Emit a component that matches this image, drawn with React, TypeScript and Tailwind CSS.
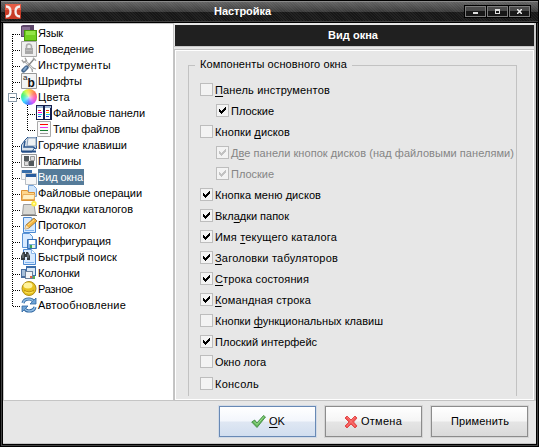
import { useLayoutEffect, useRef, type ReactNode } from "react";

/* A single-line label whose tracking is adjusted to fill a given width. */
function Label({ text, w, hot = -1, className = "" }: { text: string; w: number; hot?: number; className?: string }) {
  const ref = useRef<HTMLSpanElement>(null);
  useLayoutEffect(() => {
    const el = ref.current;
    if (!el) return;
    el.style.letterSpacing = "0px";
    const natural = el.getBoundingClientRect().width;
    el.style.letterSpacing = `${(w - natural) / text.length}px`;
  }, [text, w]);
  return (
    <span ref={ref} className={`inline-block shrink-0 whitespace-nowrap ${className}`}>
      {hot < 0 ? text : (
        <>
          {text.slice(0, hot)}
          <span className="underline decoration-1 underline-offset-[2px] [text-decoration-skip-ink:none]">{text[hot]}</span>
          {text.slice(hot + 1)}
        </>
      )}
    </span>
  );
}

const Page = () => (
  <>
    <path d="M2.5.5h8l4 4v11h-12z" fill="#d8eaff" stroke="#4b88d0" />
    <path d="M10.5.5v4h4" fill="#fff" stroke="#8db8ea" />
    <path d="M4 13h9v1H4z" fill="#82b5ee" />
  </>
);

const art: Record<string, ReactNode> = {
  lang: (
    <>
      <path d="M0 1l2-1h11v12H0z" fill="#5c4568" />
      <path d="M1 2h8v9H1z" fill="#8a7196" />
      <path d="M3 5h13v11H3z" fill="#4a9a0a" />
      <path d="M4 6h11v9H4z" fill="#72cf20" />
      <path d="M5 6h9v4H5z" fill="#93e546" />
    </>
  ),
  lock: (
    <>
      <path d="M.5.5h15v15H.5z" fill="#efefef" stroke="#a9a9a9" />
      <path d="M5.5 8V5.5a2.5 2.5 0 015 0V8" fill="none" stroke="#aaa" strokeWidth="1.6" />
      <path d="M4 7h8v6H4z" fill="#a8a8a8" />
      <path d="M5 9h6v1H5z" fill="#bcbcbc" />
    </>
  ),
  tools: (
    <>
      <path d="M4 4l8 8" stroke="#8c8c8c" strokeWidth="2.400" />
      <path d="M4 4l8 8" stroke="#e6e6e6" strokeWidth="1.100" />
      <path d="M.8 3l2 2.500 2.700-2L4 .8M11 12l.5 3M12 11l3 1" fill="none" stroke="#a0a0a0" strokeWidth="1.300" />
      <path d="M13 2L7 9" stroke="#858585" strokeWidth="1.300" />
      <path d="M12 .8l3 3" stroke="#aaa" strokeWidth="1.500" />
      <path d="M5.500 10.500l-3 3" stroke="#45668c" strokeWidth="4.400" strokeLinecap="round" />
      <path d="M5 10.500l-2 2.500" stroke="#86aad0" strokeWidth="2" strokeLinecap="round" />
    </>
  ),
  fonts: (
    <>
      <path d="M.5.5h15v15H.5z" fill="#f4f4f4" stroke="#999" />
      <text x="2" y="7" fontSize="8" fill="#222">a</text>
      <text x="6.5" y="14" fontSize="12" fontWeight="700" fill="#111">b</text>
    </>
  ),
  panels: (
    <>
      <path d="M0 0h16v15H0z" fill="#16204f" />
      <path d="M1 1h6v2H1zM9 1h6v2H9z" fill="#9db7d6" />
      <path d="M1 3h6v11H1zM9 3h5v11H9z" fill="#fff" />
      <path d="M2 5.500h3M10 5.500h3" stroke="#e22" />
      <path d="M2 7.500h4" stroke="#f0e" />
      <path d="M10 7.500h3" stroke="#eac800" />
      <path d="M2 9.500h4M10 9.500h4" stroke="#17c6e8" />
      <path d="M2 11.500h3M10 11.500h3" stroke="#2b45dc" />
    </>
  ),
  types: (
    <>
      <path d="M1.500.5h13v15h-13z" fill="#fafafa" stroke="#aaa" />
      <path d="M4 3.500h8" stroke="#f00" />
      <path d="M4 6.500h8" stroke="#e3e" />
      <path d="M4 9.500h8" stroke="#167b31" />
      <path d="M4 12.500h8" stroke="#999" />
    </>
  ),
  keys: (
    <>
      <path d="M4 3l3-3h8.500v11.500H13L11 15H.5V8z" fill="#dce4ed" stroke="#2c578f" />
      <path d="M7 1h8v8H6z" fill="#eef1f4" stroke="#8ba1bb" />
      <path d="M4 4L3 10h9l3 2" fill="none" stroke="#2c578f" strokeWidth="1.5" />
      <path d="M1 14.500h14" stroke="#234c84" strokeWidth="2" />
    </>
  ),
  plugins: (
    <>
      <path d="M.5 1.500h15v13H.5z" fill="#f8f8f8" stroke="#999" />
      <path d="M3 3h5v5H3zM8 8h5v5H8z" fill="#51585b" />
      <path d="M9.500 3.500h4v4h-4zM3.500 8.500h4v4h-4z" fill="#ddd" stroke="#999" />
    </>
  ),
  view: (
    <>
      <path d="M.5 1.500h10v9H.5z" fill="#f4f6f8" stroke="#c2c9d0" />
      <path d="M1 1h10v3H1z" fill="#386eaa" />
      <path d="M4.500 4.500h11v11h-11z" fill="#f7f7f7" stroke="#b6bdc5" />
      <path d="M5 5h10v3H5z" fill="#285d9e" />
    </>
  ),
  files: (
    <>
      <path d="M7.500.5h5l3 3v8h-8z" fill="#d2e6fb" stroke="#74a2d8" />
      <path d="M.5 5.500h6l1 2h6v8H.5z" fill="#ffd68b" stroke="#dc9336" />
      <path d="M2 9.500h12l-1 5H1z" fill="#fff0c5" stroke="#e9ae5a" />
    </>
  ),
  tabs: (
    <>
      <path d="M2.500 3.500h10.500l1.500 10H1.500z" fill="#d8d8d4" stroke="#9b9b9b" />
      <path d="M0 14.500h16" stroke="#777" />
      <circle cx="13" cy="2.700" r="2.700" fill="#ffed45" />
      <circle cx="13" cy="2.700" r="1" fill="#fffec2" />
    </>
  ),
  log: (
    <>
      <Page />
      <path d="M4 12l1-4 8-7 3 3-8 7z" fill="#f4b43f" stroke="#8f6b36" strokeWidth=".8" />
      <path d="M5 8l3 3-4 1z" fill="#f7e1ba" />
      <path d="M7 8l6-5" stroke="#ffe28b" />
    </>
  ),
  config: (
    <>
      <path d="M1.500.5h7l3 3v11h-10z" fill="#d8eaff" stroke="#5b94d6" />
      <path d="M6.500 6.500h9v9h-9z" fill="#79a9df" stroke="#356db1" />
      <path d="M8 7h6v4H8z" fill="#fff" />
      <path d="M9 12h5v3H9z" fill="#e5f2de" />
      <path d="M9 12h2v3H9z" fill="#39a65b" />
    </>
  ),
  search: (
    <>
      <Page />
      <path d="M2 3h2v2h1V3h2l2 4v4H6V8H4v3H0V7z" fill="#333a3f" />
      <path d="M2 5v4M7 5v4" stroke="#879094" />
    </>
  ),
  columns: (
    <>
      <path d="M5 1h10v10H5z" fill="#3b6ca8" />
      <path d="M6 3h8v7H6z" fill="#dce9f6" />
      <path d="M0 4h5v9H0z" fill="#4a6f9f" />
      <path d="M1 5h3v6H1z" fill="#a5bfda" />
      <path d="M4 6h8v8H4z" fill="#6d829c" />
      <path d="M5 7h6v6H5z" fill="#f2f4f6" />
      <path d="M9 11h2v2H9z" fill="#e16542" />
      <path d="M12 11h2v3h-2z" fill="#5bac54" />
    </>
  ),
  misc: (
    <>
      <circle cx="8" cy="7.500" r="7" fill="#e6c11e" stroke="#ae8d18" />
      <ellipse cx="7" cy="4.500" rx="4.500" ry="3" fill="#fff299" />
      <path d="M3 9q5 4 10 0" fill="none" stroke="#b78d13" />
      <path d="M4 11q4 2 8 0" stroke="#ffe765" fill="none" />
    </>
  ),
  update: (
    <>
      <path d="M2 6q1-4 6-4 3 0 4 2M14 10q-1 4-6 4-3 0-4-2" fill="none" stroke="#2d649f" strokeWidth="3.200" />
      <path d="M15 1v6H9zM1 15V9h6z" fill="#6fa4d7" stroke="#2d649f" strokeWidth=".8" />
      <path d="M2 6q1-4 6-4 3 0 4 2M14 10q-1 4-6 4-3 0-4-2" fill="none" stroke="#91bce3" strokeWidth="1.600" />
    </>
  ),
};

function Icon({ name }: { name: string }) {
  if (name === "colors")
    return <span className="size-4 shrink-0 rounded-full bg-[radial-gradient(circle,#fffb_0%,#fff4_40%,transparent_75%),conic-gradient(#fc3,#f64_15%,#f4a_27%,#c4f_40%,#36f_52%,#2df_65%,#3e6_80%,#cf3_92%,#fc3)]" />;
  return <svg className="size-4 shrink-0" viewBox="0 0 16 16">{art[name]}</svg>;
}

type Node = { icon: string; text: string; w: number; gap: number; child?: boolean; sel?: boolean };
const nodes: Node[] = [
  { icon: "lang", text: "Язык", w: 25, gap: 0 },
  { icon: "lock", text: "Поведение", w: 56, gap: 0 },
  { icon: "tools", text: "Инструменты", w: 73, gap: 0 },
  { icon: "fonts", text: "Шрифты", w: 44, gap: 0 },
  { icon: "colors", text: "Цвета", w: 32, gap: 0 },
  { icon: "panels", text: "Файловые панели", w: 92, gap: 0, child: true },
  { icon: "types", text: "Типы файлов", w: 67, gap: 0, child: true },
  { icon: "keys", text: "Горячие клавиши", w: 89, gap: 0 },
  { icon: "plugins", text: "Плагины", w: 43, gap: 0 },
  { icon: "view", text: "Вид окна", w: 45, gap: 0, sel: true },
  { icon: "files", text: "Файловые операции", w: 104, gap: 0 },
  { icon: "tabs", text: "Вкладки каталогов", w: 95, gap: 0 },
  { icon: "log", text: "Протокол", w: 48, gap: 0 },
  { icon: "config", text: "Конфигурация", w: 73, gap: 0 },
  { icon: "search", text: "Быстрый поиск", w: 79, gap: 0 },
  { icon: "columns", text: "Колонки", w: 42, gap: 0 },
  { icon: "misc", text: "Разное", w: 35, gap: 0 },
  { icon: "update", text: "Автообновление", w: 88, gap: 0 },
];

const vDots = "w-px shrink-0 bg-[repeating-linear-gradient(to_bottom,#000_0_1px,transparent_1px_2px)]";
const hDots = "h-px bg-[repeating-linear-gradient(to_right,#000_0_1px,transparent_1px_2px)]";

function TreeRow({ n, i }: { n: Node; i: number }) {
  const last = i === nodes.length - 1;
  return (
    <div className="relative flex h-4 items-start pl-2">
      <span className={`${vDots} ${i === 0 ? "mt-[9px] h-[7px]" : last ? "h-[9px]" : "h-4"}`} />
      {n.child && (
        <>
          <span className="w-[14px] shrink-0" />
          <span className={`${vDots} ${n.icon === "types" ? "h-[9px]" : "h-4"}`} />
        </>
      )}
      <span className={`${hDots} mt-[9px] w-[7px] shrink-0`} />
      <span className="w-px shrink-0" />
      <Icon name={n.icon} />
      <span className={`ml-px flex h-4 items-center ${n.sel ? "bg-[#557b99] pr-px text-white" : ""}`}>
        <Label text={n.text} w={n.w} />
      </span>
      {n.icon === "colors" && (
        <span className="absolute left-1 top-1 flex size-[9px] items-center justify-center border border-[#8a9cab] bg-white">
          <span className="h-px w-[5px] bg-[#536b7b]" />
        </span>
      )}
    </div>
  );
}

type Opt = { text: string; w: number; hot?: number; on?: boolean; sub?: boolean; off?: boolean };
const options: Opt[] = [
  { text: "Панель инструментов", w: 115, hot: 0 },
  { text: "Плоские", w: 43, on: true, sub: true },
  { text: "Кнопки дисков", w: 75, hot: 7 },
  { text: "Две панели кнопок дисков (над файловыми панелями)", w: 283, hot: 1, on: true, sub: true, off: true },
  { text: "Плоские", w: 43, on: true, sub: true, off: true },
  { text: "Кнопка меню дисков", w: 106, on: true },
  { text: "Вкладки папок", w: 74, hot: 3, on: true },
  { text: "Имя текущего каталога", w: 122, hot: 4, on: true },
  { text: "Заголовки табуляторов", w: 123, hot: 0, on: true },
  { text: "Строка состояния", w: 94, hot: 0, on: true },
  { text: "Командная строка", w: 96, hot: 0, on: true },
  { text: "Кнопки функциональных клавиш", w: 168, hot: 7 },
  { text: "Плоский интерфейс", w: 102, on: true },
  { text: "Окно лога", w: 51 },
  { text: "Консоль", w: 44 },
];

function Check({ o, i }: { o: Opt; i: number }) {
  return (
    <label className={`flex shrink-0 items-start ${i === 12 ? "h-5" : i === 13 ? "h-[22px]" : "h-[21px]"} ${o.sub ? "pl-4" : ""} ${o.off ? "text-[#858585]" : ""}`}>
      <span className="flex size-[13px] shrink-0 items-center justify-center border border-[#bdbdbd] bg-[#f3f3f3]">
        {o.on && (
          <svg className="size-[7px]" viewBox="0 0 7 7" shapeRendering="crispEdges">
            <path d="M0 2h1v1h1v1h1V3h1V2h1V1h1V0h1v3H6v1H5v1H4v1H3v1H2V6H1V5H0z" fill={o.off ? "#c2c2c2" : "#000"} />
          </svg>
        )}
      </span>
      <span className="ml-0.5 mt-px flex h-[13px] items-center">
        <Label text={o.text} w={o.w} hot={o.hot} />
      </span>
    </label>
  );
}

function Push({ children, primary = false }: { children: ReactNode; primary?: boolean }) {
  return (
    <button
      className={`flex h-[31px] w-[97px] items-center border ${
        primary
          ? "border-[#6889b5] bg-[linear-gradient(#fff_0%,#f3f6fc_48%,#dfe7f3_52%,#d1deef_100%)] shadow-[0_0_0_1px_#d1dae6]"
          : "border-[#8c8c8c] bg-[linear-gradient(#fff_0%,#f5f5f5_48%,#e5e5e5_52%,#dadada_100%)] shadow-[0_0_0_1px_#d5d5d5]"
      }`}
    >
      {children}
    </button>
  );
}

const caption = "flex h-[11px] w-[21px] items-center justify-center border border-[#7b7b7b] bg-[linear-gradient(#4b4b4b_0_45%,#171717_50%)]";

export default function App() {
  return (
    <div className="flex h-[447px] w-[539px] flex-col overflow-hidden bg-black font-['Liberation_Sans',sans-serif] text-[11px] leading-[13px] text-black">
      <header className="mx-px mb-px mt-px flex h-[21px] shrink-0 items-start border-b border-t border-b-[#414141] border-t-[#8a8a8a] bg-[repeating-linear-gradient(45deg,#ffffff0d_0_1px,transparent_1px_2px),linear-gradient(#626262_0%,#3b3b3b_50%,#171717_52%,#171717_100%)]">
        <svg className="ml-1 mt-[2px] size-4 shrink-0" viewBox="0 0 16 16">
          <rect width="16" height="15" rx="1" fill="#c83b27" />
          <path d="M0 0h16v6H0z" fill="#e65c45" />
          <path d="M1 2.500q4.500 0 4.500 5T1 12.500M15 2.500q-4.500 0-4.500 5t4.500 5" fill="none" stroke="#f4eeee" strokeWidth="2.300" />
        </svg>
        <span className="ml-[193px] mt-[3px] flex font-bold text-white"><Label text="Настройка" w={57} /></span>
        <div className="ml-auto mr-[7px] mt-[3px] flex h-[13px] gap-px border border-black bg-black">
          <span className={caption}><i className="mt-[3px] h-0.5 w-[5px] bg-[#ddd]" /></span>
          <span className={caption}><i className="h-[5px] w-[5px] border border-t-2 border-[#ddd]" /></span>
          <span className={caption}>
            <svg className="size-[5px]" viewBox="0 0 5 5"><path d="M0 0l5 5M5 0L0 5" stroke="#eee" strokeWidth="1.500" /></svg>
          </span>
        </div>
      </header>
      <div className="mx-px mb-px flex min-h-0 grow flex-col border-x border-b border-[#414141] px-px pb-px">
        <main className="flex min-h-0 grow flex-col border-b border-[#c4c4c4] bg-[#e7e7e7]">
          <div className="flex h-[378px] shrink-0">
            <nav className="w-[171px] shrink-0 border border-[#c5c5c5] bg-white pt-px">
              {nodes.map((n, i) => <TreeRow key={n.text} n={n} i={i} />)}
            </nav>
            <section className="flex min-w-0 grow flex-col border-r-2 border-[#c8c8c8]">
              <h1 className="ml-px mt-0.5 flex h-[21px] shrink-0 items-center bg-[#202020] pl-[153px] font-bold text-white">
                <Label text="Вид окна" w={50} />
              </h1>
              <div className="h-px shrink-0 bg-[#c8c8c8]" />
              <div className="mt-0.5 flex min-h-0 grow border border-r-0 border-[#c2c2c2]">
                <div className="flex grow border border-white pl-3 pr-4 pt-[7px]">
                  <fieldset className="mb-1 flex grow flex-col">
                    <legend className="flex h-[13px] w-full items-center">
                      <span className="mt-px h-px w-[7px] bg-[#c2c2c2]" />
                      <span className="mx-[5px]"><Label text="Компоненты основного окна" w={147} /></span>
                      <span className="mt-px h-px grow bg-[#c2c2c2]" />
                    </legend>
                    <div className="-mt-1.5 flex h-[331px] flex-col border-x border-[#c2c2c2] pl-[11px] pt-[18px]">
                      {options.map((o, i) => <Check key={i} o={o} i={i} />)}
                    </div>
                  </fieldset>
                </div>
              </div>
            </section>
          </div>
          <footer className="flex gap-[9px] pl-[216px] pt-[5px]">
            <Push primary>
              <svg className="ml-[31px] mr-[3px] size-[15px]" viewBox="0 0 15 15">
                <path d="M.7 8l3-2 2.200 3L12.500 1.500 14.500 3 6 13.500z" fill="#63b75b" stroke="#37843a" strokeWidth=".8" />
                <path d="M3 7.500l3 3 7-8" fill="none" stroke="#9ddd91" />
              </svg>
              <Label text="OK" w={16} hot={0} />
            </Push>
            <Push>
              <svg className="ml-[18px] mr-[3px] size-[14px]" viewBox="0 0 14 14">
                <path d="M1 3l2-2 4 4 4-4 2 2-3.500 4L13 11l-2 2-4-4-4 4-2-2 4-4z" fill="#f25555" stroke="#e04a4a" strokeWidth="1" />
                <path d="M3 2l8 9M11 2l-8 9" stroke="#ff8580" strokeWidth=".7" />
              </svg>
              <Label text="Отмена" w={41} />
            </Push>
            <Push><span className="-mt-px flex pl-[19px]"><Label text="Применить" w={58} /></span></Push>
          </footer>
        </main>
      </div>
    </div>
  );
}
